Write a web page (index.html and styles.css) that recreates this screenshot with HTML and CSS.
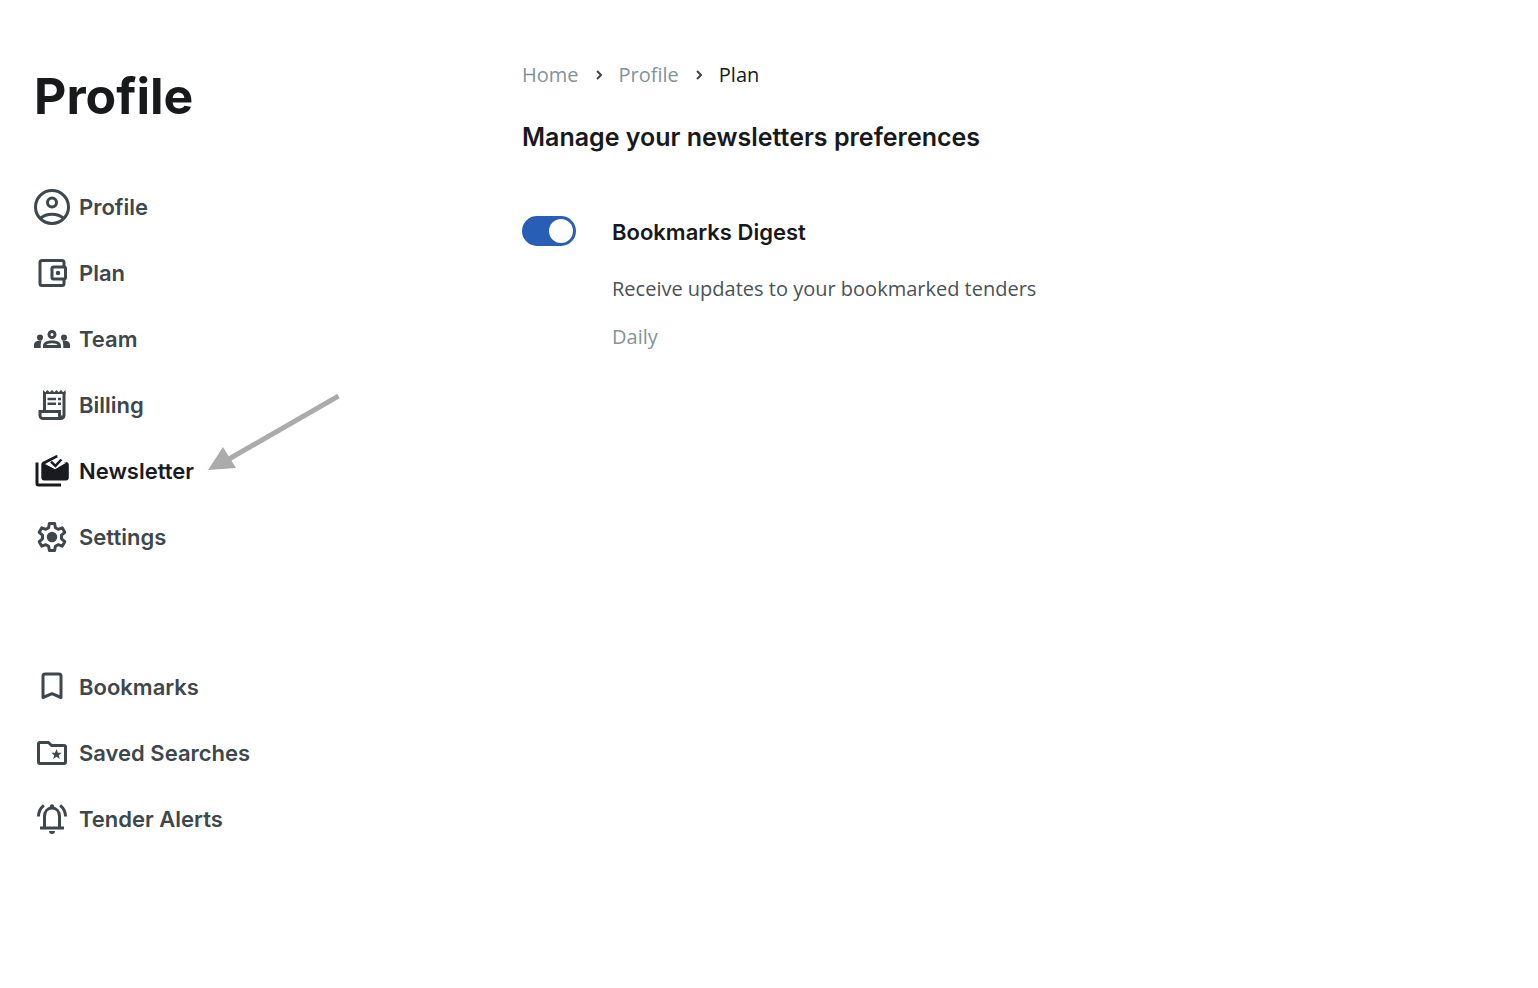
FILE: index.html
```html
<!DOCTYPE html>
<html lang="en">
<head>
<meta charset="utf-8">
<meta name="viewport" content="width=device-width, initial-scale=1">
<title>Profile</title>
<link rel="stylesheet" href="styles.css">
</head>
<body>
<div class="page">
  <aside class="sidebar">
    <h1 class="title">Profile</h1>
    <nav class="menu" aria-label="Account">
      <a class="item" href="#"><svg class="icon" viewBox="0 0 36 36"><g fill="none" stroke="currentColor" stroke-width="3"><circle cx="18" cy="18" r="16.5"/><circle cx="18" cy="13.5" r="4.5"/><path d="M6.5 29.2C9.5 26.6 13.5 25.3 18 25.3s8.500 1.300 11.500 3.900"/></g></svg><span>Profile</span></a>
      <a class="item" href="#"><svg class="icon" viewBox="0 0 36 36"><g fill="none" stroke="currentColor" stroke-width="3"><path d="M30 12V7.500a2 2 0 0 0-2-2H8a2 2 0 0 0-2 2v21a2 2 0 0 0 2 2h20a2 2 0 0 0 2-2V24"/><rect x="18" y="12" width="13.500" height="12" rx="1.500"/></g><circle cx="24" cy="18" r="2.250"/></svg><span>Plan</span></a>
      <a class="item" href="#"><svg class="icon" viewBox="0 0 36 36"><circle cx="6" cy="16.500" r="3"/><circle cx="30" cy="16.500" r="3"/><path d="M7.700 19.600A9 9 0 0 0 6 19.500c-1.300 0-2.500.3-3.600.8A3.900 3.900 0 0 0 0 23.800V27h6.700v-2.600c0-1.700.3-3.300 1-4.800zM28.300 19.600a9 9 0 0 1 1.700-.1c1.300 0 2.500.3 3.600.8A3.900 3.900 0 0 1 36 23.800V27h-6.700v-2.600c0-1.700-.3-3.300-1-4.800z"/><circle cx="18" cy="13.500" r="3" fill="none" stroke="currentColor" stroke-width="3"/><path fill-rule="evenodd" d="M9 27v-2.400c0-3.400 4-5.200 9-5.200s9 1.800 9 5.200V27zm3.200-2.900h11.600c-.3-1-2.800-1.900-5.800-1.900s-5.500.9-5.800 1.900z"/></svg><span>Team</span></a>
      <a class="item" href="#"><svg class="icon" viewBox="0 0 36 36"><path d="M9 3l2.250 2.250L13.500 3l2.250 2.250L18 3l2.250 2.250L22.500 3l2.250 2.250L27 3l2.250 2.250L31.500 3v4H9z"/><g fill="none" stroke="currentColor" stroke-width="3"><path d="M10.500 5v18M30 5v23.500a3 3 0 0 1-3 3H9a3 3 0 0 1-3-3V24.500h19.500v4a1.500 1.500 0 0 0 3 0"/></g><path fill="none" stroke="currentColor" stroke-width="2.600" d="M13.500 12h8.500m2 0h3m-13.500 4.700h8.500m2 0h3"/></svg><span>Billing</span></a>
      <a class="item item-active" href="#" aria-current="page"><svg class="icon" viewBox="0 0 36 36"><path d="M1.500 9.500h3V30.500H27v3H4.500a3 3 0 0 1-3-3z"/><path d="M22.500 1.900L9 8.700a3 3 0 0 0-1.700 2.700V24.500a3 3 0 0 0 3 3h21.500a3 3 0 0 0 3-3V12a3 3 0 0 0-3-3H29l-6-5.300 1-.6z"/><path d="M11 10.900L24.300 3.900l5.700 5.300 2.500.4L21 16.300z" fill="#fff"/><path d="M17 8.700l4.400 4.200 6-6.400" fill="none" stroke="currentColor" stroke-width="2.500"/></svg><span>Newsletter</span>
        <svg class="pointer" viewBox="0 0 132 78" aria-hidden="true"><path d="M21 65L130.500 2" fill="none" stroke="#ababab" stroke-width="5"/><path d="M0 76L15 53l13 21z" fill="#ababab"/></svg>
      </a>
      <a class="item" href="#"><svg class="icon" viewBox="0 0 36 36"><path fill="none" stroke="currentColor" stroke-width="3" stroke-linejoin="round" d="M15.400 4.500h5.200l.8 4.200 2.700 1.600 4.100-1.500 2.600 4.500-3.300 2.900v3.600l3.300 2.900-2.600 4.500-4.100-1.500-2.700 1.600-.8 4.200h-5.200l-.8-4.200-2.700-1.600-4.100 1.500-2.600-4.500 3.300-2.900v-3.600l-3.300-2.900 2.600-4.500 4.100 1.500 2.700-1.600z"/><circle cx="18" cy="18" r="5.250"/></svg><span>Settings</span></a>
    </nav>
    <nav class="menu" aria-label="Saved content">
      <a class="item" href="#"><svg class="icon" viewBox="0 0 36 36"><path fill="none" stroke="currentColor" stroke-width="3" stroke-linejoin="round" d="M9 28.500V7a2 2 0 0 1 2-2h14a2 2 0 0 1 2 2v21.500l-9-3.800z"/></svg><span>Bookmarks</span></a>
      <a class="item" href="#"><svg class="icon" viewBox="0 0 36 36"><path fill="none" stroke="currentColor" stroke-width="3" stroke-linejoin="round" d="M6 7.500h8.500l3 3H30a1.500 1.500 0 0 1 1.500 1.500v15a1.500 1.500 0 0 1-1.500 1.500H6A1.500 1.500 0 0 1 4.500 27V9A1.500 1.500 0 0 1 6 7.500z"/><path d="M22.500 14l1.400 3.700 3.800.1-3 2.400 1.100 3.800-3.300-2.200-3.300 2.200 1.100-3.800-3-2.400 3.800-.1z"/></svg><span>Saved Searches</span></a>
      <a class="item" href="#"><svg class="icon" viewBox="0 0 36 36"><g fill="none" stroke="currentColor" stroke-width="3"><path d="M6 27h24M10.500 27V15.500C10.500 10.500 13.500 7 18 7s7.500 3.500 7.500 8.500V27"/><path d="M4.500 15.500C4.500 11.500 6.500 7.200 9.800 4.400M31.500 15.500C31.500 11.500 29.500 7.200 26.200 4.400"/></g><circle cx="18" cy="5.500" r="2.250"/><path d="M15 30h6a3 3 0 0 1-6 0z"/></svg><span>Tender Alerts</span></a>
    </nav>
  </aside>
  <main class="content">
    <nav class="crumbs" aria-label="Breadcrumb">
      <a class="crumb" href="#">Home</a>
      <svg class="chevron" viewBox="0 0 6 10"><path d="M1 1l4 4-4 4"/></svg>
      <a class="crumb" href="#">Profile</a>
      <svg class="chevron" viewBox="0 0 6 10"><path d="M1 1l4 4-4 4"/></svg>
      <span class="crumb crumb-current" aria-current="page">Plan</span>
    </nav>
    <h2 class="heading">Manage your newsletters preferences</h2>
    <div class="preference">
      <input class="switch" type="checkbox" role="switch" id="digest" checked>
      <div class="details">
        <label class="name" for="digest">Bookmarks Digest</label>
        <p class="text">Receive updates to your bookmarked tenders</p>
        <p class="text text-muted">Daily</p>
      </div>
    </div>
  </main>
</div>
</body>
</html>
```
FILE: styles.css
```css
* { box-sizing: border-box; }
body {
  margin: 0;
  background: #fff;
  color: #18191b;
  font-family: "Open Sans", "Noto Sans", sans-serif;
  font-size: 20px;
}
h1, h2, p { margin: 0; }
a { text-decoration: none; }
.page { display: flex; min-height: 100vh; }
.sidebar {
  flex: 0 0 488px;
  padding: 64px 34px;
}
.title {
  margin-bottom: 61px;
  font: 700 50px/64px Inter, sans-serif;
}
.menu { display: flex; flex-direction: column; align-items: flex-start; gap: 30px; }
.menu + .menu { margin-top: 114px; }
.item {
  position: relative;
  display: flex;
  align-items: center;
  gap: 9px;
  color: #3e474b;
  font: 600 22px/36px Inter, sans-serif;
}
.item-active { color: #1a1b21; }
.icon { width: 36px; height: 36px; fill: currentColor; }
.pointer {
  position: absolute;
  left: 174px;
  bottom: 17px;
  width: 132px;
  height: 78px;
}
.content { flex: 1; padding: 60px 34px; }
.crumbs { display: flex; align-items: center; gap: 17px; line-height: 30px; }
.crumb { color: #849399; }
.crumb-current { color: #18191b; }
.chevron { width: 6px; height: 10px; fill: none; stroke: #3e474b; stroke-width: 2; }
.heading {
  margin-top: 29px;
  font: 600 25px/36px Inter, sans-serif;
}
.preference { display: flex; align-items: flex-start; gap: 36px; margin-top: 61px; }
.switch {
  appearance: none;
  flex: none;
  display: flex;
  justify-content: flex-end;
  width: 54px;
  height: 30px;
  margin: 0;
  padding: 3px;
  border-radius: 15px;
  background: #285eb5;
}
.switch::before { content: ""; width: 24px; height: 24px; border-radius: 50%; background: #fff; }
.switch:not(:checked) { justify-content: flex-start; background: #849399; }
.name { display: block; font: 600 22px/32px Inter, sans-serif; }
.text { margin-top: 18px; color: #4a5256; line-height: 30px; }
.name + .text { margin-top: 26px; }
.text-muted { color: #849399; }
```
